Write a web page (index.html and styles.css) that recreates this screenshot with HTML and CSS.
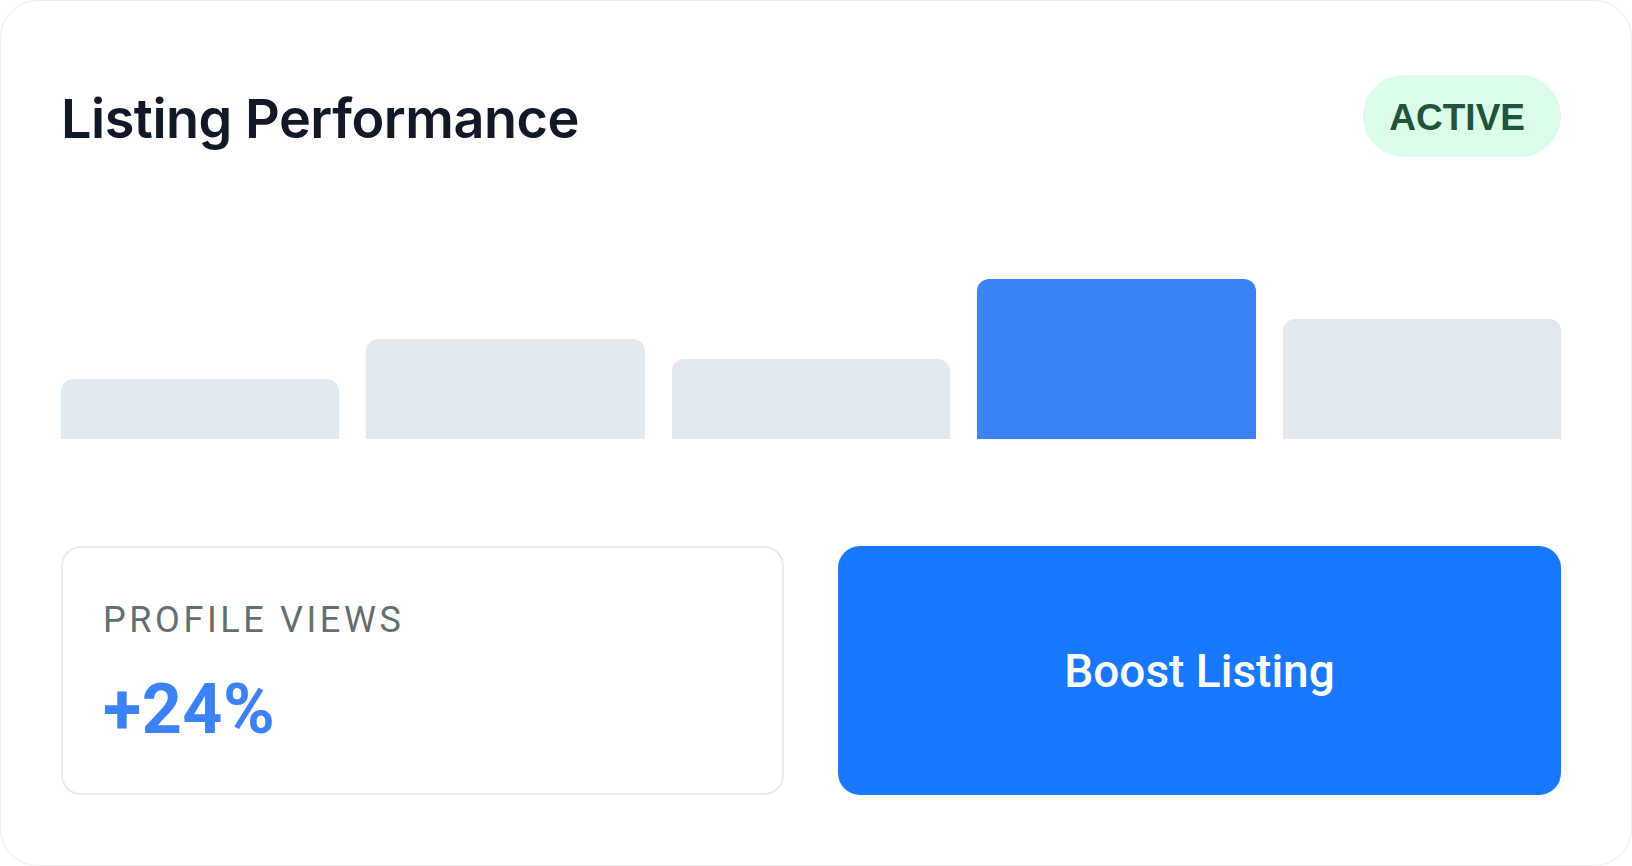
FILE: index.html
```html
<!DOCTYPE html>
<html lang="en">
<head>
<meta charset="utf-8">
<title>Listing Performance</title>
<link rel="stylesheet" href="styles.css">
</head>
<body>
<div class="card">
  <div class="header">
    <h1 class="title">Listing Performance</h1>
    <span class="badge">ACTIVE</span>
  </div>
  <div class="chart">
    <div class="bar" style="height:30%"></div>
    <div class="bar" style="height:50%"></div>
    <div class="bar" style="height:40%"></div>
    <div class="bar bar-active" style="height:80%"></div>
    <div class="bar" style="height:60%"></div>
  </div>
  <div class="bottom">
    <div class="stat">
      <div class="stat-label">PROFILE VIEWS</div>
      <div class="stat-value">+24%</div>
    </div>
    <button class="boost">Boost Listing</button>
  </div>
</div>
</body>
</html>
```

FILE: styles.css
```css
* { box-sizing: border-box; }
html, body { margin: 0; padding: 0; background: #ffffff; }
body { font-family: Roboto, "Noto Sans", sans-serif; }

.card {
  width: 1632px;
  height: 866px;
  background: #ffffff;
  border: 1px solid #ececec;
  border-radius: 38px;
  padding: 74px 70px 70px 60px;
  display: flex;
  flex-direction: column;
}

.header {
  height: 82px;
  display: flex;
  align-items: center;
  justify-content: space-between;
}

.title {
  margin: 0;
  font-family: Inter, Roboto, sans-serif;
  font-weight: 600;
  font-size: 54px;
  color: #111827;
  letter-spacing: -0.5px;
  position: relative;
  top: 2px;
}

.badge {
  height: 82px;
  padding: 3px 36px 0 26px;
  border-radius: 41px;
  background: #dcfce7;
  color: #22543d;
  font-family: "Liberation Sans", Arial, sans-serif;
  font-weight: 700;
  font-size: 37px;
  display: flex;
  align-items: center;
}

.chart {
  margin-top: 82px;
  height: 200px;
  display: flex;
  align-items: flex-end;
  gap: 27px;
}

.bar {
  flex: 1;
  background: #e2e8f0;
  border-radius: 12px 12px 0 0;
}

.bar-active { background: #3b82f6; }

.bottom {
  margin-top: 107px;
  height: 249px;
  display: grid;
  grid-template-columns: 1fr 1fr;
  gap: 54px;
}

.stat {
  border: 2px solid #e8eaed;
  border-radius: 20px;
  padding: 5px 40px 0;
  display: flex;
  flex-direction: column;
  justify-content: center;
  gap: 32px;
}

.stat-label {
  font-size: 36px;
  letter-spacing: 3.6px;
  color: #646e70;
  line-height: 1.15;
}

.stat-value {
  font-size: 70px;
  font-weight: 700;
  color: #3b82f6;
  line-height: 1.05;
  letter-spacing: 0.5px;
}

.boost {
  border: none;
  border-radius: 22px;
  background: #1878ff;
  color: #ffffff;
  font-family: Roboto, "Noto Sans", sans-serif;
  font-weight: 500;
  font-size: 46px;
  cursor: pointer;
}
```
